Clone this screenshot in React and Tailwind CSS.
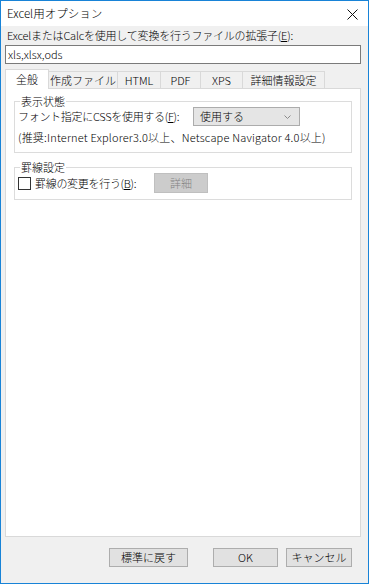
const font = { fontFamily: '"Noto Sans CJK JP", "Noto Sans", sans-serif' }

const tabs = ['全般', '作成ファイル', 'HTML', 'PDF', 'XPS', '詳細情報設定']
const tabWidths = ['w-[44px]', 'w-[69px]', 'w-[43px]', 'w-[40px]', 'w-[42px]', 'w-[82px]']

function Btn({ children, className = '', disabled = false }) {
  return (
    <button
      className={
        'h-[19px] text-[11px] leading-none flex items-center justify-center border ' +
        (disabled
          ? 'bg-[#cccccc] border-[#bfbfbf] text-[#838383] '
          : 'bg-[#e1e1e1] border-[#adadad] text-black ') +
        className
      }
    >
      {children}
    </button>
  )
}

function Group({ title, children, className = '' }) {
  return (
    <fieldset className={'border border-[#dcdcdc] mx-[8px] px-[3px] pb-[4px] ' + className}>
      <legend className="text-[11px] leading-[11px] px-[1px] ml-[2px]">{title}</legend>
      {children}
    </fieldset>
  )
}

export default function App() {
  return (
    <div
      className="w-[369px] h-[584px] border border-[#1883d7] bg-[#f0f0f0] flex flex-col text-black font-light"
      style={font}
    >
      {/* title bar */}
      <div className="h-[25px] bg-white flex items-center justify-between pl-[6px] pr-[10px] shrink-0">
        <span className="text-[11.5px] leading-none">Excel用オプション</span>
        <svg width="11" height="11" viewBox="0 0 11 11" className="mt-[1px]">
          <path d="M0.5 0.5 L10.5 10.5 M10.5 0.5 L0.5 10.5" stroke="#111" strokeWidth="1" />
        </svg>
      </div>

      <div className="flex-1 flex flex-col pl-[4px] pr-[7px]">
        <div className="text-[11px] leading-none mt-[4px] ml-[2px] tracking-[-0.2px]">
          ExcelまたはCalcを使用して変換を行うファイルの拡張子(<span className="underline">E</span>):
        </div>
        <div className="mt-[4px] h-[19px] bg-white border border-[#7a7a7a] flex items-center px-[2px] text-[11px] leading-none">
          xls,xlsx,ods
        </div>

        {/* tabs */}
        <div className="mt-[5px] flex items-end h-[19px] relative z-10">
          {tabs.map((t, i) =>
            i === 0 ? (
              <div
                key={t}
                className={
                  tabWidths[i] +
                  ' h-[20px] -mb-[1px] bg-white border border-b-0 border-[#d9d9d9] flex items-center justify-center text-[11px] leading-none'
                }
              >
                {t}
              </div>
            ) : (
              <div
                key={t}
                className={
                  tabWidths[i] +
                  ' h-[17px] bg-[#f0f0f0] border border-l-0 border-b-0 border-[#d9d9d9] flex items-center justify-center text-[11px] leading-none'
                }
              >
                {t}
              </div>
            )
          )}
        </div>

        {/* panel */}
        <div className="h-[449px] bg-white border border-[#d9d9d9] flex flex-col pt-[7px]">
          <Group title="表示状態">
            <div className="flex items-center">
              <span className="text-[11px] leading-none w-[175px] tracking-[-0.3px]">
                フォント指定にCSSを使用する(<span className="underline">F</span>):
              </span>
              <div className="w-[107px] h-[19px] bg-[#e5e5e5] border border-[#acacac] flex items-center justify-between pl-[6px] pr-[8px] text-[11px] leading-none">
                <span>使用する</span>
                <svg width="7" height="4" viewBox="0 0 7 4">
                  <path d="M0.5 0.5 L3.5 3.5 L6.5 0.5" stroke="#8a8a8a" strokeWidth="1" fill="none" />
                </svg>
              </div>
            </div>
            <div className="text-[11px] leading-none mt-[6px] mb-[5px] tracking-[0.2px]">
              (推奨:Internet Explorer3.0以上、Netscape Navigator 4.0以上)
            </div>
          </Group>

          <Group title="罫線設定" className="mt-[9px]">
            <div className="flex items-center pb-[2px]">
              <div className="w-[13px] h-[13px] border border-[#333] bg-white mr-[4px]" />
              <span className="text-[11px] leading-none w-[119px] tracking-[-0.3px]">
                罫線の変更を行う(<span className="underline">B</span>):
              </span>
              <Btn disabled className="w-[54px] h-[20px]">
                詳細
              </Btn>
            </div>
          </Group>
        </div>

        {/* bottom buttons */}
        <div className="flex mt-[11px]">
          <Btn className="w-[79px] ml-[104px]">標準に戻す</Btn>
          <Btn className="w-[65px] ml-[25px]">OK</Btn>
          <Btn className="w-[66px] ml-[8px]">キャンセル</Btn>
        </div>
      </div>
    </div>
  )
}
